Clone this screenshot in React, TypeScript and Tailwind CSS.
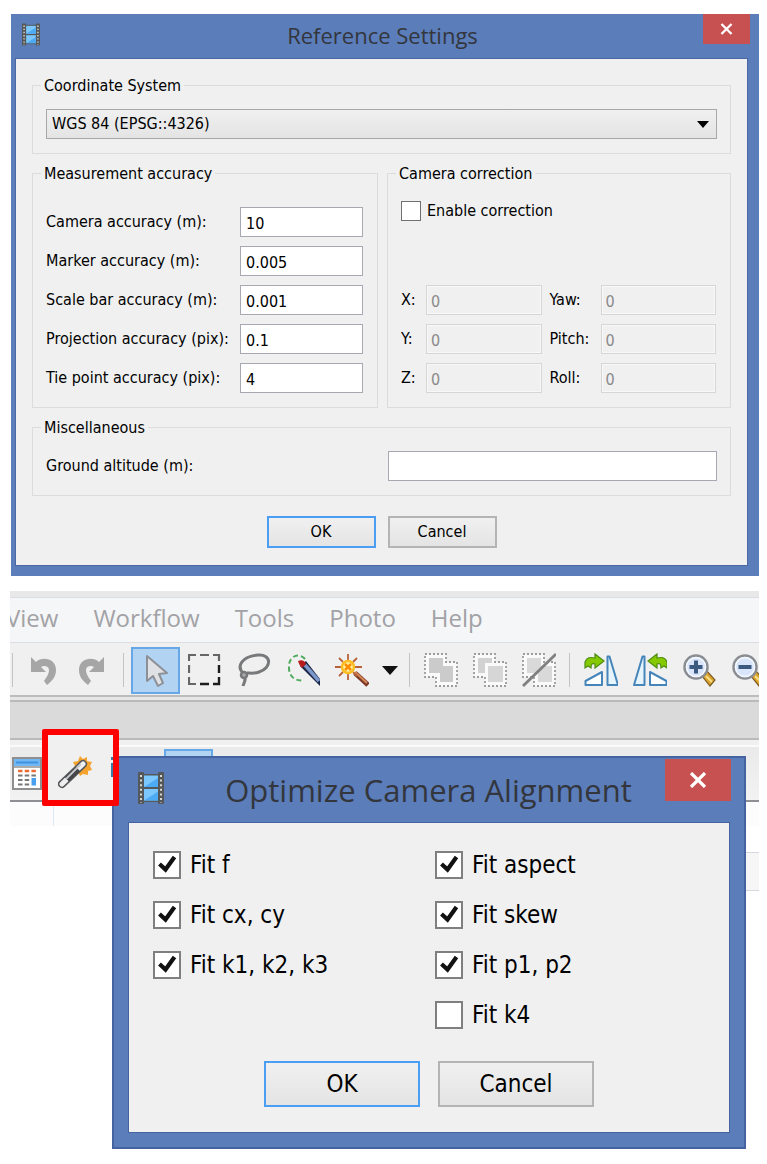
import type { ReactNode } from "react";

function FilmIcon({ className }: { className: string }) {
  return (
    <svg viewBox="0 0 26 32" className={className} aria-hidden="true">
      <rect x="0" y="0" width="6" height="32" rx="1" fill="#55585b" />
      <rect x="20" y="0" width="6" height="32" rx="1" fill="#55585b" />
      <rect x="5" y="2" width="16" height="28" fill="#55585b" />
      <rect x="6" y="3.500" width="14" height="11.500" fill="#7cc8fc" />
      <rect x="6" y="17" width="14" height="11.500" fill="#7cc8fc" />
      <path d="M6 15 20 6v9zM6 28.500 20 19.500v9z" fill="#4dabf5" />
      <path d="M3 3v28M23 3v28" stroke="#d9d6cc" strokeWidth="2" strokeDasharray="2 2.600" />
    </svg>
  );
}

function CloseGlyph({ className }: { className: string }) {
  return (
    <svg viewBox="0 0 18 16" className={className} aria-hidden="true">
      <path d="M2 1 16 15M16 1 2 15" stroke="#fff" strokeWidth="3.200" fill="none" />
    </svg>
  );
}

function Group({ title, className = "", children }: { title: string; className?: string; children: ReactNode }) {
  return (
    <fieldset className={"min-w-0 border border-[#dcdcdc] px-2 pb-3.5 " + className}>
      <legend className="h-5 px-[3px] text-base leading-[22px]">{title}</legend>
      <div className="px-[5px]">{children}</div>
    </fieldset>
  );
}

const measurements = [
  { id: "camera", label: "Camera accuracy (m):", value: "10" },
  { id: "marker", label: "Marker accuracy (m):", value: "0.005" },
  { id: "scale", label: "Scale bar accuracy (m):", value: "0.001" },
  { id: "projection", label: "Projection accuracy (pix):", value: "0.1" },
  { id: "tie", label: "Tie point accuracy (pix):", value: "4" },
];

const corrections = ["X:", "Yaw:", "Y:", "Pitch:", "Z:", "Roll:"];

function DialogButton({ label, primary, large }: { label: string; primary?: boolean; large?: boolean }) {
  return (
    <button
      type="button"
      className={
        "border-2 bg-linear-to-b from-[#f0f0f0] to-[#e4e4e4] " +
        (primary ? "border-[#4a9ff5] " : "border-[#b4b4b4] ") +
        (large ? "h-[46px] w-[156px] text-2xl" : "h-8 w-[109px] text-base")
      }
    >
      {label}
    </button>
  );
}

function ReferenceSettings() {
  return (
    <section
      aria-label="Reference Settings"
      className="bg-[#5b7dba] pr-[11px] pb-2.5 pl-1"
    >
      <header className="-mr-0.5 grid h-11 grid-cols-[1fr_auto_1fr] font-['Open_Sans','Noto_Sans',sans-serif]">
        <FilmIcon className="mt-[9px] ml-[7px] h-[23px] w-[18px]" />
        <h1 className="text-[22px] leading-[43px] text-[#33363c]">Reference Settings</h1>
        <button type="button" aria-label="Close" className="flex h-[30px] w-[47px] items-center justify-center justify-self-end bg-[#c75050]">
          <CloseGlyph className="h-3 w-[13px]" />
        </button>
      </header>
      <form className="flex flex-col gap-[9px] border border-[#4a68a5] bg-[#f0f0f0] px-4 pt-4 pb-[17px] text-base">
        <Group title="Coordinate System" className="pt-3.5">
          <div className="grid items-center">
            <select
              aria-label="Coordinate System"
              className="col-start-1 row-start-1 h-[30px] w-full appearance-none border border-[#a8a8a8] bg-linear-to-b from-[#f0f0f0] to-[#e4e4e4] px-[5px] text-base leading-5"
            >
              <option>WGS 84 (EPSG::4326)</option>
            </select>
            <svg viewBox="0 0 12 7" className="pointer-events-none col-start-1 row-start-1 mr-2 h-[7px] w-3 justify-self-end" aria-hidden="true">
              <path d="M0 0h12L6 7z" fill="#000" />
            </svg>
          </div>
        </Group>
        <div className="grid grid-cols-[173fr_172fr] gap-[9px]">
          <Group title="Measurement accuracy" className="pt-6">
            <div className="flex flex-col gap-[9px] pr-px">
              {measurements.map((m) => (
                <div key={m.id} className="flex items-center justify-between">
                  <label htmlFor={m.id} className="whitespace-nowrap">{m.label}</label>
                  <input id={m.id} defaultValue={m.value} className="h-[30px] w-[123px] border border-[#a7a9b2] bg-white px-[5px] pt-0.5" />
                </div>
              ))}
            </div>
          </Group>
          <Group title="Camera correction" className="pt-[18px]">
            <label className="flex h-5 items-center gap-1.5">
              <input type="checkbox" className="size-5 appearance-none border border-[#707070] bg-white" />
              Enable correction
            </label>
            <div className="mt-[64px] grid grid-cols-[25px_1fr_59px_1fr] items-center gap-y-[9px] pr-px">
              {corrections.map((name, i) => (
                <div key={name} className="contents">
                  <label htmlFor={"c" + i} className={i % 2 ? "pl-2" : ""}>{name}</label>
                  <input id={"c" + i} disabled defaultValue="0" className="h-[30px] w-full min-w-0 border border-[#d6d6d6] bg-[#f0f0f0] px-1 pt-0.5 text-[#8a8a8a] shadow-[inset_0_0_0_1px_#f8f8f8]" />
                </div>
              ))}
            </div>
          </Group>
        </div>
        <Group title="Miscellaneous" className="pt-3.5">
          <div className="grid grid-cols-2 items-center gap-x-3">
            <label htmlFor="ground">Ground altitude (m):</label>
            <input id="ground" className="h-[30px] w-full border border-[#a7a9b2] bg-white px-1" />
          </div>
        </Group>
        <div className="mt-[11px] flex justify-center gap-3">
          <DialogButton label="OK" primary />
          <DialogButton label="Cancel" />
        </div>
      </form>
    </section>
  );
}

function Tool({ label, active, disabled, children }: { label: string; active?: boolean; disabled?: boolean; children: ReactNode }) {
  return (
    <button
      type="button"
      aria-label={label}
      disabled={disabled}
      className={
        "flex h-[47px] w-[49px] shrink-0 items-center justify-center " +
        (active ? "border-2 border-[#66a7e8] bg-[#b3d3f3]" : "")
      }
    >
      <svg viewBox="0 0 34 34" className="size-[34px] shrink-0" fill="none" aria-hidden="true">
        {children}
      </svg>
    </button>
  );
}

function Separator({ className = "px-1.5" }: { className?: string }) {
  return (
    <div className={"shrink-0 " + className}>
      <div className="h-[34px] w-px bg-[#c4c4c4]" />
    </div>
  );
}

function Flip() {
  return (
    <>
      <path d="M1 15V9C3 4 6 4 11 5V1l9 7-9 7v-4c-3-1-4 0-4 4l-3-2z" fill="#85c900" stroke="#4e8c14" strokeWidth="1.200" />
      <path d="M23.500 3.500h2L34 32H23.500z" fill="#e6f4fc" stroke="#4685ba" strokeWidth="2" strokeLinejoin="round" />
      <path d="M1.500 32V28L18 19V32z" fill="#fff" stroke="#4685ba" strokeWidth="2" strokeLinejoin="round" />
    </>
  );
}

function Magnifier({ plus }: { plus?: boolean }) {
  return (
    <>
      <path d="M20 23 25 18 33 27 28 33z" fill="#dca42f" stroke="#7b5a22" strokeWidth="1.200" />
      <path d="M24 23 30 29" stroke="#f6de83" strokeWidth="2" />
      <circle cx="14" cy="14" r="11.500" fill="#d8e5fa" stroke="#8a8d92" strokeWidth="2.500" />
      <circle cx="14" cy="14" r="9.500" stroke="#f5f9ff" strokeWidth="1.500" />
      <path d={plus ? "M7.500 14h13M14 7.500v13" : "M7.500 14h13"} stroke="#3c5a80" strokeWidth="4" />
    </>
  );
}

function GhostOutline() {
  return <path d="M1 1h21v8h11v24H12v-9H1z" fill="#fafafa" stroke="#9c9c9c" strokeWidth="1.800" strokeDasharray="2 2" />;
}

const wandRays = "M13 1v6M13 21v6M0 14h6M20 14h7M4 5l4 4M18 19l4 4M22 5l-4 4M8 19l-4 4";

function MainWindow() {
  return (
    <section aria-label="Main window" className="col-start-1 row-start-1 overflow-hidden">
      <div className="h-1.5 bg-[#e8e8e8]" />
      <nav className="flex h-[46px] items-center gap-[35px] border-y border-y-[#dcdde0] bg-[#f5f6f7] pb-1 font-['Open_Sans','Noto_Sans',sans-serif] text-2xl leading-8 text-[#a2a2a6]">
        <a href="#view" className="-ml-1">View</a>
        <a href="#workflow">Workflow</a>
        <a href="#tools">Tools</a>
        <a href="#photo">Photo</a>
        <a href="#help">Help</a>
      </nav>
      <div className="flex h-[54px] items-center border-b-2 border-[#bcbcbc] bg-[#f0f0f0] pt-0.5">
        <Separator className="pr-[5px] pl-0.5" />
        <Tool label="Undo" disabled>
          <path d="M5 4v15h15l-5-5c3-2 8-1 8 3 0 4-3 8-5 11l3 4c5-4 9-8 9-15C30 5 16 3 10 9z" fill="#a6a6a6" />
        </Tool>
        <Tool label="Redo" disabled>
          <path d="M29 4v15H14l5-5c-3-2-8-1-8 3 0 4 3 8 5 11l-3 4C8 28 4 24 4 17 4 5 18 3 24 9z" fill="#a6a6a6" />
        </Tool>
        <Separator className="px-[7px]" />
        <Tool label="Select" active>
          <path d="M8 3v25l6-5 5 10 5-3-4-9 8-1z" fill="#dfe1e4" stroke="#8d9096" strokeWidth="2" strokeLinejoin="round" />
        </Tool>
        <Tool label="Rectangle selection">
          <path d="M1 8V2h7M12 2h9M25 2h6v6" stroke="#666" strokeWidth="2.200" />
          <path d="M1 12v8M1 24v7h7" stroke="#666" strokeWidth="2.200" />
          <path d="M31 12v8M31 24v7h-6M12 31h9" stroke="#1c1c1c" strokeWidth="2.400" />
        </Tool>
        <Tool label="Lasso selection">
          <path d="M7 21C-2 13 6 3 21 2c14-1 14 13 1 17-5 2-9 1-12 1" stroke="#77797b" strokeWidth="3" />
          <circle cx="7" cy="22" r="3" fill="#a9abad" stroke="#77797b" strokeWidth="2.500" />
          <path d="M8 24c1 4-1 5-2 9" stroke="#77797b" strokeWidth="3" />
        </Tool>
        <Tool label="Brush selection">
          <path d="M19 6C13-1 2 3 3 15c0 8 6 14 15 12" stroke="#4eaa5d" strokeWidth="2" strokeDasharray="5 3" />
          <path d="M14 13 20 8 34 26v7z" fill="#1c2747" />
          <path d="M19 12 33 28" stroke="#7c99cb" strokeWidth="3.500" />
          <path d="M12 8c4-2 7 0 8 3l-4 4c-2-2-3-4-4-7z" fill="#b91c1c" />
        </Tool>
        <Tool label="Magic wand">
          <path d="M20 20 33 32" stroke="#7c3a26" strokeWidth="5" />
          <path d="M20 19 32 30" stroke="#d78757" strokeWidth="2" />
          <path d={wandRays} stroke="#b8623a" strokeWidth="1.800" />
          <circle cx="13" cy="14" r="6" fill="#fff2a0" stroke="#fbbf24" strokeWidth="2.500" />
          <path d="M10 11l6 6M16 11l-6 6" stroke="#fb8c00" strokeWidth="2.500" />
        </Tool>
        <button type="button" aria-label="More selection tools" className="flex w-[27px] shrink-0 justify-center">
          <svg viewBox="0 0 16 9" className="h-[9px] w-4" aria-hidden="true">
            <path d="M0 0h16L8 9z" fill="#111" />
          </svg>
        </button>
        <Separator />
        <Tool label="Add selection" disabled>
          <GhostOutline />
          <path d="M5 5h14v8h10v16H16v-9H5z" fill="#cbcbcb" />
        </Tool>
        <Tool label="Subtract selection" disabled>
          <GhostOutline />
          <path d="M5 5h14v5h-7v10H5z" fill="#d2d2d2" />
          <path d="M15 13h15v16H15z" fill="#d6d6d6" />
        </Tool>
        <Tool label="Clear selection" disabled>
          <GhostOutline />
          <path d="M5 5h14v15H5zM16 13h14v16H16z" fill="#d9d9d9" />
          <path d="M1 33 34 1" stroke="#808080" strokeWidth="2.800" />
        </Tool>
        <Separator />
        <Tool label="Rotate right">
          <Flip />
        </Tool>
        <Tool label="Rotate left">
          <g transform="matrix(-1 0 0 1 35 0)">
            <Flip />
          </g>
        </Tool>
        <Tool label="Zoom in">
          <Magnifier plus />
        </Tool>
        <Tool label="Zoom out">
          <Magnifier />
        </Tool>
      </div>
      <div className="h-[3px] bg-[#e6e6e6]" />
      <div className="h-10 border-y-2 border-[#bababa] bg-[#dadada]" />
      <div className="h-[7px] border-b-2 border-[#fafafa] bg-[#f0f0f0]" />
      <div className="flex h-[55px] border-b-2 border-[#8d8f93] bg-linear-to-b from-[#eaeaea] to-[#f2f2f2]">
        <button type="button" aria-label="Table" className="mt-2.5 ml-0.5 h-[33px] w-[30px] shrink-0">
          <svg viewBox="0 0 30 33" className="h-[33px] w-[30px]" aria-hidden="true">
            <rect x="1" y="1" width="28" height="31" fill="#fff" stroke="#8f8f8f" strokeWidth="2" />
            <rect x="2" y="2" width="26" height="7" fill="#71b7f4" />
            <path d="M4 5.500h22" stroke="#3f92e2" strokeWidth="2" />
            <path d="M1 10h28" stroke="#8f8f8f" strokeWidth="1.500" />
            <path d="M6 14h18" stroke="#ed6c33" strokeWidth="2.600" strokeDasharray="4.500 2.200" />
            <path d="M6 18.500h18M6 23h12M6 27.500h12" stroke="#777" strokeWidth="2.200" strokeDasharray="4.500 2.200" />
            <rect x="19.500" y="21" width="4.500" height="7.500" fill="#4aa0f0" />
          </svg>
        </button>
        <button
          type="button"
          aria-label="Optimize cameras"
          className="z-20 -mt-[18px] flex size-[77px] shrink-0 items-center justify-between rounded-xs border-6 border-[#fe0000] bg-[#f0f0f0] pt-2 pl-2.5"
        >
          <svg viewBox="0 0 34 34" className="size-[34px]" aria-hidden="true">
            <path d="m22 1 3 3 4-2v4l5 1-2 4 2 4-4 1v4l-5-1-3 2-2-4-5-2 2-4-2-4 5-1z" fill="#f5a32c" />
            <path d="M4 29 25 9" stroke="#56585c" strokeWidth="8" strokeLinecap="round" />
            <path d="M4 29 25 9" stroke="#efefef" strokeWidth="5" strokeLinecap="round" />
            <path d="M9 24.500 20 14" stroke="#44464a" strokeWidth="6" />
            <path d="M8 24 23 9" stroke="#c7c9cc" strokeWidth="1.800" />
          </svg>
          <svg viewBox="0 0 3 34" className="h-[34px] w-[3px]" aria-hidden="true">
            <path d="M1 2h2v3H1zM1 8h2v14H1z" fill="#3a7ca5" />
          </svg>
        </button>
        <div className="mt-0.5 ml-[45px] h-[47px] w-[49px] border-2 border-[#66a7e8] bg-[#b3d3f3]" />
      </div>
      <div className="h-6 bg-[#fcfcfc] pl-[43px]">
        <div className="h-full w-px bg-[#dfe8f6]" />
      </div>
      <div className="mt-[26px] ml-auto h-[39px] w-10 border-y border-[#d5d8de] bg-[#f6f6f6]" />
    </section>
  );
}

function FitOption({ label, checked }: { label: string; checked: boolean }) {
  return (
    <label className="flex h-7 items-center gap-[9px] whitespace-nowrap">
      <span className="grid">
        <input type="checkbox" defaultChecked={checked} className="peer col-start-1 row-start-1 size-7 appearance-none border-2 border-[#7f7f7f] bg-white" />
        <svg viewBox="0 0 28 28" className="pointer-events-none col-start-1 row-start-1 hidden size-7 peer-checked:block" aria-hidden="true">
          <path d="M6.500 13 12.500 18.500 21.500 6" fill="none" stroke="#111" strokeWidth="4.200" />
        </svg>
      </span>
      {label}
    </label>
  );
}

function OptimizeDialog() {
  return (
    <section
      aria-label="Optimize Camera Alignment"
      className="z-10 col-start-1 row-start-1 mt-[165px] mr-[13px] ml-[102px] border-2 border-[#4563a0] bg-[#5b7dba] px-3.5 pb-3.5"
    >
      <header className="-mr-px grid h-16 grid-cols-[48px_1fr_66px] font-['Open_Sans','Noto_Sans',sans-serif]">
        <FilmIcon className="mt-3.5 ml-2.5 h-8 w-[26px]" />
        <h2 className="pl-4 text-center text-[31px] leading-[64px] whitespace-nowrap text-[#33363c]">Optimize Camera Alignment</h2>
        <button type="button" aria-label="Close" className="mt-px flex h-[42px] items-center justify-center bg-[#c75050]">
          <CloseGlyph className="h-4 w-[18px]" />
        </button>
      </header>
      <form className="border border-[#4563a0] bg-[#f0f0f0] px-6 pt-7 pb-[25px] text-2xl">
        <div className="grid grid-cols-2 gap-x-3">
          <div className="flex flex-col gap-[22px]">
            <FitOption label="Fit f" checked />
            <FitOption label="Fit cx, cy" checked />
            <FitOption label="Fit k1, k2, k3" checked />
          </div>
          <div className="flex flex-col gap-[22px]">
            <FitOption label="Fit aspect" checked />
            <FitOption label="Fit skew" checked />
            <FitOption label="Fit p1, p2" checked />
            <FitOption label="Fit k4" checked={false} />
          </div>
        </div>
        <div className="mt-8 flex justify-center gap-[18px]">
          <DialogButton label="OK" primary large />
          <DialogButton label="Cancel" large />
        </div>
      </form>
    </section>
  );
}

export default function App() {
  return (
    <main className="min-h-screen bg-white pt-3.5 pr-2 pb-4 pl-2.5 font-['DejaVu_Sans_Condensed','Noto_Sans',sans-serif] text-black">
      <div className="pl-px">
        <ReferenceSettings />
      </div>
      <div className="mt-[15px] grid">
        <MainWindow />
        <OptimizeDialog />
      </div>
    </main>
  );
}
